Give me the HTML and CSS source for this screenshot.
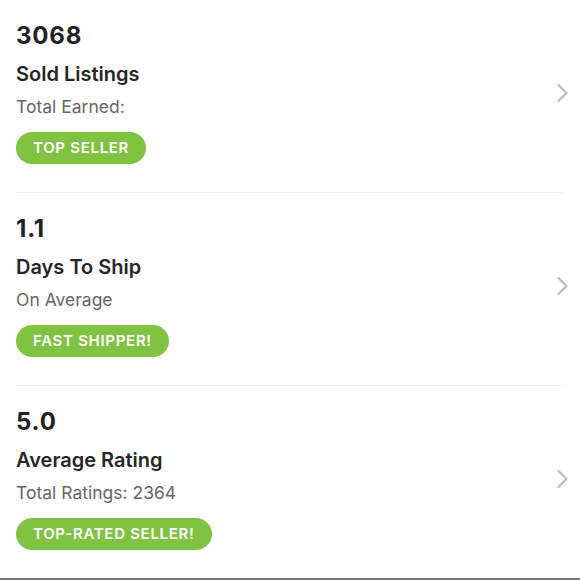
FILE: index.html
```html
<!DOCTYPE html>
<html>
<head>
<meta charset="utf-8">
<link rel="stylesheet" href="styles.css">
</head>
<body>
<div class="list">
  <div class="item">
    <div class="info">
      <div class="value">3068</div>
      <div class="title">Sold Listings</div>
      <div class="sub">Total Earned:</div>
      <span class="badge">TOP SELLER</span>
    </div>
    <svg class="chev" width="14" height="20" viewBox="0 0 14 20"><path d="M2.5 2 L10.5 10 L2.5 18" fill="none" stroke="#bdbdbd" stroke-width="2.4" stroke-linecap="round" stroke-linejoin="round"/></svg>
  </div>
  <div class="item">
    <div class="info">
      <div class="value">1.1</div>
      <div class="title">Days To Ship</div>
      <div class="sub">On Average</div>
      <span class="badge">FAST SHIPPER!</span>
    </div>
    <svg class="chev" width="14" height="20" viewBox="0 0 14 20"><path d="M2.5 2 L10.5 10 L2.5 18" fill="none" stroke="#bdbdbd" stroke-width="2.4" stroke-linecap="round" stroke-linejoin="round"/></svg>
  </div>
  <div class="item last">
    <div class="info">
      <div class="value">5.0</div>
      <div class="title">Average Rating</div>
      <div class="sub">Total Ratings: 2364</div>
      <span class="badge">TOP-RATED SELLER!</span>
    </div>
    <svg class="chev" width="14" height="20" viewBox="0 0 14 20"><path d="M2.5 2 L10.5 10 L2.5 18" fill="none" stroke="#bdbdbd" stroke-width="2.4" stroke-linecap="round" stroke-linejoin="round"/></svg>
  </div>
  <div class="bar"></div>
</div>
</body>
</html>
```
FILE: styles.css
```css
html, body {
  margin: 0;
  padding: 0;
  background: #ffffff;
}
body {
  font-family: Inter, "Open Sans", sans-serif;
  color: #222222;
  width: 580px;
  height: 580px;
  overflow: hidden;
}
.list {
  display: flex;
  flex-direction: column;
}
.item {
  display: flex;
  align-items: center;
  justify-content: space-between;
  margin: 0 16px;
  padding: 22px 0 28px 0;
  border-bottom: 1px solid #eeeeee;
}
.item.last {
  border-bottom: none;
}
.info {
  display: flex;
  flex-direction: column;
  align-items: flex-start;
}
.value {
  font-size: 24px;
  line-height: 28px;
  font-weight: 700;
  color: #222222;
  letter-spacing: 0.8px;
}
.title {
  margin-top: 12.4px;
  font-size: 20px;
  line-height: 24px;
  font-weight: 600;
  color: #262626;
}
.sub {
  margin-top: 9.6px;
  font-size: 17.5px;
  line-height: 22px;
  color: #666666;
}
.badge {
  margin-top: 14px;
  height: 32px;
  line-height: 32px;
  padding: 0 17px;
  border-radius: 16px;
  background: #80c342;
  color: #ffffff;
  font-size: 15px;
  font-weight: 600;
  letter-spacing: 0.7px;
}
.chev {
  margin-right: -6px;
}
.bar {
  height: 2px;
  background: #777777;
}
```
